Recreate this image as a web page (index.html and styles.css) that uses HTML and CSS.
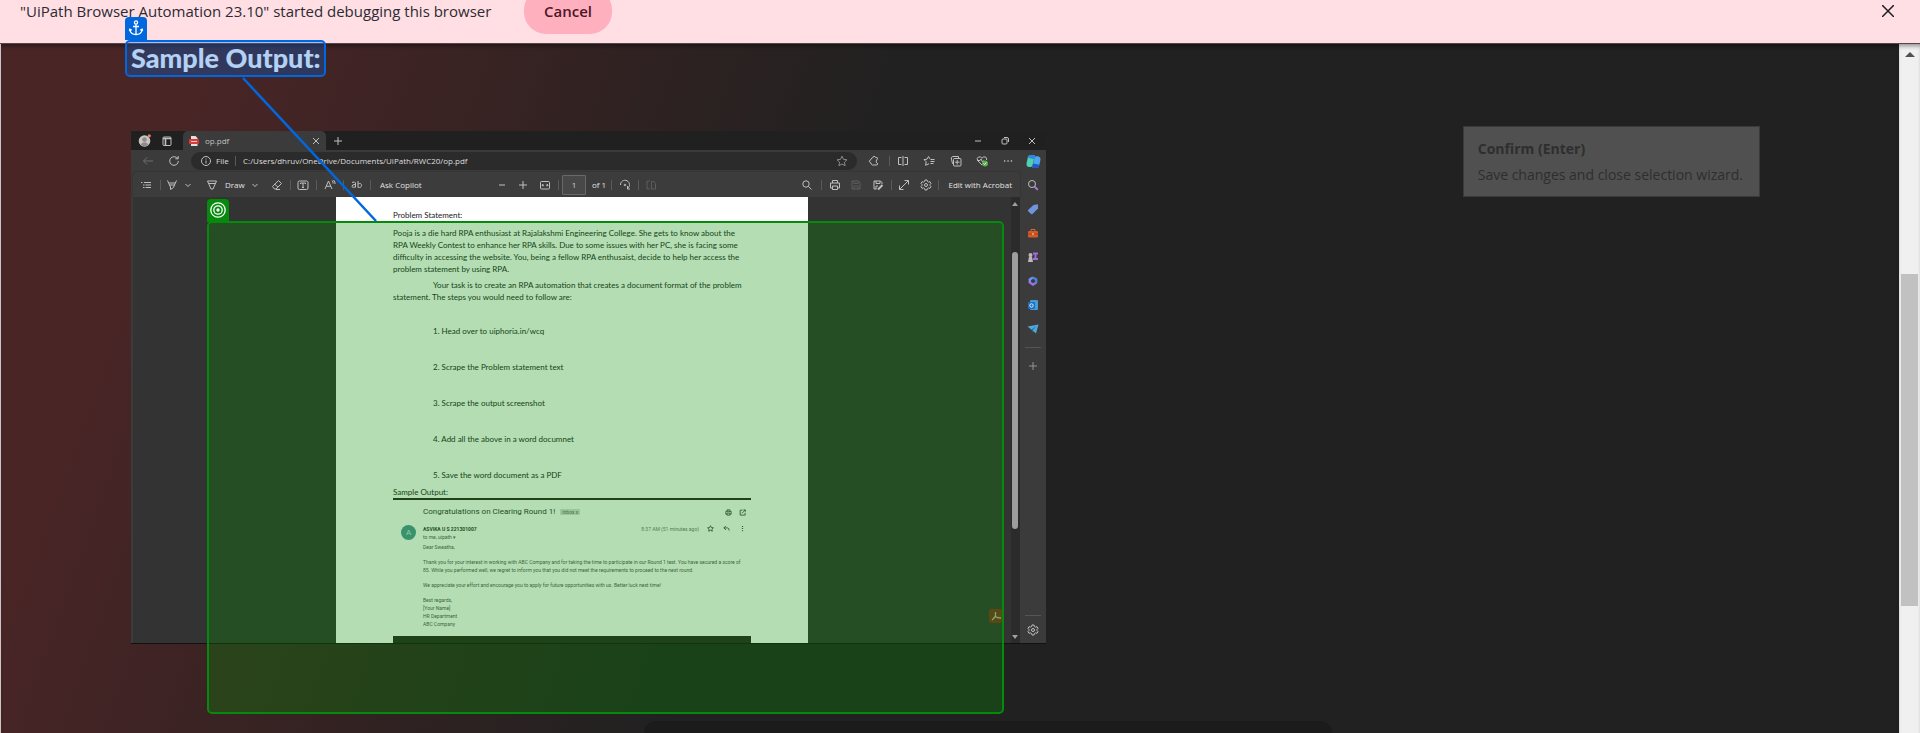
FILE: index.html
```html
<!DOCTYPE html>
<html lang="en">
<head>
<meta charset="utf-8">
<title>Sample Output</title>
<link rel="stylesheet" href="styles.css">
</head>
<body>
<svg class="sprite" aria-hidden="true">
  <symbol id="chev" viewBox="0 0 8 8"><path d="M1.500 3 4 5.500 6.500 3"/></symbol>
  <symbol id="x" viewBox="0 0 12 12"><path d="M3 3 9 9M9 3 3 9"/></symbol>
  <symbol id="plus" viewBox="0 0 12 12"><path d="M6 2V10M2 6H10"/></symbol>
  <symbol id="minus" viewBox="0 0 12 12"><path d="M3 6H9"/></symbol>
  <symbol id="gear" viewBox="0 0 12 12"><path d="M5 1h2l.4 1.500 1.100.6 1.500-.4 1 1.700L10 5.500v1L11 7.600l-1 1.700-1.500-.4-1.100.6L7 11H5l-.4-1.500-1.100-.6-1.500.4-1-1.700L2 6.500v-1L1 4.400l1-1.700 1.500.4 1.100-.6z"/><circle cx="6" cy="6" r="1.500"/></symbol>
  <symbol id="mag" viewBox="0 0 12 12"><circle cx="5" cy="5" r="3.200"/><path d="M7.500 7.500 10.500 10.500"/></symbol>
  <symbol id="star" viewBox="0 0 12 12"><path d="M6 1.200 7.500 4.400 11 4.800 8.400 7.200 9.100 10.700 6 9 2.900 10.700 3.600 7.200 1 4.800 4.500 4.400z"/></symbol>
  <symbol id="print" viewBox="0 0 12 12"><path d="M3.500 4V1.500h5V4M3.500 9H1.500V4h9v5H8.500M3.500 7h5v3.500h-5z"/></symbol>
  <symbol id="save" viewBox="0 0 12 12"><path d="M2 2h6.500L10 3.500V10H2zM4 2v2.500h4V2M4 10V7h4v3"/></symbol>
</svg>

<header class="infobar">
  <div class="infobar-row">
    <p class="infobar-text">"UiPath Browser Automation 23.10" started debugging this browser</p>
    <button class="cancel" type="button">Cancel</button>
    <button class="infobar-close" type="button" aria-label="Close"><svg viewBox="0 0 12 12"><path d="M0 0 12 12M12 0 0 12"/></svg></button>
  </div>
</header>

<div class="viewport">
<main class="stage">
  <h2 class="heading">Sample Output:</h2>

  <section class="window" aria-label="op.pdf">
    <div class="titlebar">
      <svg class="avatar-icon" viewBox="0 0 13 13"><circle cx="6.500" cy="7" r="5.800" fill="#c9c5c3"/><circle cx="6.500" cy="5.500" r="2.300" fill="#8f8a88"/><path d="M2.700 10.500q3.800-4.500 7.600 0-3.800 3.500-7.600 0" fill="#8f8a88"/><circle cx="11.300" cy="1.800" r="1.600" fill="#e88070"/></svg>
      <button class="ic workspaces" type="button" aria-label="Workspaces"><svg viewBox="0 0 12 12"><rect x="2" y="2" width="8" height="8.500" rx="1"/><path d="M2 3.500H10M4.500 3V10" stroke-width="1.600"/></svg></button>
      <div class="tab">
        <svg class="pdf-icon" viewBox="0 0 10 10"><path d="M2 0h4.500L8.500 2v8H2z" fill="#e9dcdc"/><rect y="3" width="10" height="5" rx="1" fill="#d83b3b"/><path d="M2 5.500H8" stroke="#f3c8c8"/></svg>
        <span class="tab-name">op.pdf</span>
        <button class="ic" type="button" aria-label="Close tab"><svg><use href="#x"/></svg></button>
      </div>
      <button class="ic newtab" type="button" aria-label="New tab"><svg><use href="#plus"/></svg></button>
      <div class="wincontrols">
        <button class="ic" type="button" aria-label="Minimize"><svg><use href="#minus"/></svg></button>
        <button class="ic" type="button" aria-label="Restore"><svg viewBox="0 0 12 12"><rect x="3" y="4" width="5" height="5" rx="1"/><path d="M5 2.500h3q1.500 0 1.500 1.500v3"/></svg></button>
        <button class="ic" type="button" aria-label="Close window"><svg><use href="#x"/></svg></button>
      </div>
    </div>

    <div class="addressbar">
      <button class="ic dim" type="button" aria-label="Back"><svg viewBox="0 0 12 12"><path d="M11 6H1.500M5 2.500 1.500 6 5 9.500"/></svg></button>
      <button class="ic" type="button" aria-label="Refresh"><svg viewBox="0 0 12 12"><path d="M10.300 6A4.300 4.300 0 1 1 8.500 2.500L10 3.500M10.200 1v2.800H7.400"/></svg></button>
      <div class="url">
        <svg class="glyph" viewBox="0 0 12 12"><circle cx="6" cy="6" r="4.500"/><path d="M6 5.500V8.500M6 3.500V4.500"/></svg>
        <span class="file">File</span><i class="sep"></i>
        <span class="path">C:/Users/dhruv/OneDrive/Documents/UiPath/RWC20/op.pdf</span>
        <button class="ic fav" type="button" aria-label="Favorite"><svg><use href="#star"/></svg></button>
      </div>
      <div class="browser-tools">
        <button class="ic" type="button" aria-label="Extensions"><svg viewBox="0 0 12 12"><path d="M10 3.500 9 2.700H7.800Q7.400 1.300 6 1.400 4.800 1.600 4.600 2.800L2.800 4Q2.700 4.800 2.700 5 1.300 5.200 1.300 6.300 1.400 7.300 2.700 7.500 2.800 9.500 4.500 10H8Q9.500 10 10 9M10 3.500Q8.200 4.300 8.200 6.200 8.200 8.200 10 9"/></svg></button>
        <i class="sep"></i>
        <button class="ic" type="button" aria-label="Split screen"><svg viewBox="0 0 12 12"><path d="M4.500 2.500h-3v7h3M7.500 2.500h3v7h-3M6 1V11"/></svg></button>
        <button class="ic" type="button" aria-label="Favorites"><svg viewBox="0 0 12 12"><path d="M7 4 5.500 1.500 4 4.200 1 4.600 3.200 6.800 2.600 10.300 6 8.700M7.500 4.500H11.500M7.500 6.500H11.500M7.500 8.500H10.500"/></svg></button>
        <button class="ic" type="button" aria-label="Collections"><svg viewBox="0 0 12 12"><path d="M3.500 8.500H2.500L1.200 3 2.500 1.500H8.500V3"/><rect x="3.500" y="3.500" width="7.500" height="7.500" rx="1"/><path d="M7.200 5V9.500M5 7.200H9.500"/></svg></button>
        <button class="ic" type="button" aria-label="Browser essentials"><svg viewBox="0 0 12 12"><path d="M6 10 1.500 5.500Q.5 3 2.500 2 4.500 1.200 6 3.200 7.500 1.200 9.500 2 11 3 10.500 5M1.500 5.500H4L5 4 6.500 7 7.500 5.500"/><circle cx="9" cy="8.500" r="3" fill="#5fae4a" stroke="none"/><path d="M7.600 8.500 8.600 9.500 10.300 7.600" stroke="#e8f5e4"/></svg></button>
        <button class="ic" type="button" aria-label="More"><svg viewBox="0 0 12 12"><path d="M2 6H3.300M5.400 6H6.700M8.800 6H10.100" stroke-width="1.400"/></svg></button>
        <button class="copilot" type="button" aria-label="Copilot"><svg viewBox="0 0 16 16"><path d="M4.500 1H9.500L7 12Q6.500 13.800 5 13.800H3.500Q0 13.500 .6 9.500L2 3.500Q2.600 1.200 4.500 1z" fill="#4fd0b4"/><path d="M2 4Q3 1 4.500 1H9.500L8.500 5.500z" fill="#2b8be0"/><path d="M11.500 15H6.500L9 4Q9.500 2.500 11 2.500h1.500Q16 3 15.400 6.500L14 12.500Q13.400 14.800 11.500 15z" fill="#4aa6ee"/><path d="M6.500 15 7.600 10 14.300 11.500Q13.400 15 11.500 15z" fill="#2357c4"/></svg></button>
      </div>
    </div>

    <div class="lower">
      <div class="viewer">
        <div class="pdfbar">
          <div class="tools-left">
            <button class="ic" type="button" aria-label="Contents"><svg viewBox="0 0 12 12"><path d="M1 3.500H2.500M4 3.500H11M3 6H4.500M5.500 6H11M3 8.500H4.500M5.500 8.500H11"/></svg></button>
            <i class="sep"></i>
            <button class="ic" type="button" aria-label="Highlight"><svg viewBox="0 0 12 12"><path d="M1.500 1.500 3.500 6H8.500L10.500 1.500M3.200 4H9M3.500 6 4.500 8V10.500L7.500 8.500 8.500 6"/></svg></button>
            <button class="ic small" type="button" aria-label="Highlight options"><svg><use href="#chev"/></svg></button>
            <button class="ic" type="button" aria-label="Pen"><svg viewBox="0 0 12 12"><path d="M1.500 2H10.500L7 10H5zM3 4.500H9"/></svg></button>
            <button class="txt" type="button">Draw</button>
            <button class="ic small" type="button" aria-label="Draw options"><svg><use href="#chev"/></svg></button>
            <button class="ic" type="button" aria-label="Erase"><svg viewBox="0 0 12 12"><path d="M1.500 7.500 7.500 1.500 10.500 4.500 5 10H3.500zM3.800 5.200 7 8.200M5 10.500H9"/></svg></button>
            <i class="sep"></i>
            <button class="ic" type="button" aria-label="Add text"><svg viewBox="0 0 12 12"><rect x="1" y="2" width="10" height="8.500" rx="1.500"/><path d="M3.500 5V4H8.500V5M6 4V8.500M5 8.500H7"/></svg></button>
            <i class="sep"></i>
            <button class="ic" type="button" aria-label="Read aloud"><svg viewBox="0 0 12 12"><path d="M1 10 4.500 2 8 10M2.300 7.300H6.800M8 1.500Q9.500 3 9 4.500M9.500 1Q11.500 3 11 5"/></svg></button>
            <i class="sep"></i>
            <button class="ic" type="button" aria-label="Translate"><svg viewBox="0 0 12 12"><path d="M1 3.500Q4 2 4.500 4V8.500M4.500 5.500Q1 5.300 1 7.300 1.500 9.500 4.500 7.500M7 2V8.500M7 5Q10.500 3.500 10.500 6.500 10 9.500 7 8"/></svg></button>
            <i class="sep"></i>
            <button class="txt" type="button">Ask Copilot</button>
          </div>
          <div class="tools-mid">
            <button class="ic" type="button" aria-label="Zoom out"><svg><use href="#minus"/></svg></button>
            <button class="ic" type="button" aria-label="Zoom in"><svg><use href="#plus"/></svg></button>
            <button class="ic" type="button" aria-label="Fit to width"><svg viewBox="0 0 12 12"><rect x="1.500" y="2.500" width="9" height="7.500" rx="1"/><path d="M3 6.200H5M7 6.200H9M4 5 3 6.200 4 7.400M8 5 9 6.200 8 7.400"/></svg></button>
            <i class="sep"></i>
            <input class="pageno" type="text" value="1" aria-label="Page number">
            <span class="txt">of 1</span>
            <i class="sep"></i>
            <button class="ic" type="button" aria-label="Rotate"><svg viewBox="0 0 12 12"><path d="M1.500 6A4.500 4.500 0 1 1 8.500 9.500M8.500 7V10H11"/><circle cx="6" cy="6" r=".8"/></svg></button>
            <i class="sep"></i>
            <button class="ic faint" type="button" aria-label="Page view"><svg viewBox="0 0 12 12"><path d="M5 2H2V10H5M6.500 2.500H9L10.500 4.500V10H6.500z"/></svg></button>
          </div>
          <div class="tools-right">
            <button class="ic" type="button" aria-label="Find"><svg><use href="#mag"/></svg></button>
            <i class="sep"></i>
            <button class="ic" type="button" aria-label="Print"><svg><use href="#print"/></svg></button>
            <button class="ic faint" type="button" aria-label="Save"><svg><use href="#save"/></svg></button>
            <button class="ic" type="button" aria-label="Save as"><svg viewBox="0 0 12 12"><path d="M10 5V3.500L8.500 2H2V10H4.500M4 2v2.500h4V2M4 10V7H6"/><path d="M6 10.500 10.500 6" stroke-width="2"/></svg></button>
            <i class="sep"></i>
            <button class="ic" type="button" aria-label="Full screen"><svg viewBox="0 0 12 12"><path d="M2 10 10 2M6.500 1.500H10.500V5.500M1.500 6.500V10.500H5.500"/></svg></button>
            <button class="ic" type="button" aria-label="Settings"><svg><use href="#gear"/></svg></button>
            <i class="sep"></i>
            <button class="txt" type="button">Edit with Acrobat</button>
          </div>
        </div>

        <div class="canvas">
          <article class="page">
            <p class="line">Problem Statement:</p>
            <p class="para">Pooja is a die hard RPA enthusiast at Rajalakshmi Engineering College. She gets to know about the<br>RPA Weekly Contest to enhance her RPA skills. Due to some issues with her PC, she is facing some<br>difficulty in accessing the website. You, being a fellow RPA enthusaist, decide to help her access the<br>problem statement by using RPA.</p>
            <p class="para indent">Your task is to create an RPA automation that creates a document format of the problem<br>statement. The steps you would need to follow are:</p>
            <div class="steps">
              <p>1. Head over to uiphoria.in/wcq</p>
              <p>2. Scrape the Problem statement text</p>
              <p>3. Scrape the output screenshot</p>
              <p>4. Add all the above in a word documnet</p>
              <p>5. Save the word document as a PDF</p>
            </div>
            <p class="line">Sample Output:</p>
            <section class="mail">
              <div class="mail-head">
                <h3 class="subject">Congratulations on Clearing Round 1!</h3>
                <span class="inbox">Inbox x</span>
                <span class="mail-icons"><svg><use href="#print"/></svg><svg viewBox="0 0 12 12"><path d="M6 2H2V10.500H10.500V6.500M7.500 1.500H10.800V4.800M5 7.500 10.500 1.800"/></svg></span>
              </div>
              <div class="sender">
                <span class="initial">A</span>
                <div class="who"><strong>ASVIKA U S 221301007</strong><span>to me, uipath ▾</span></div>
                <span class="when">8:37 AM (51 minutes ago)</span>
                <span class="mail-icons wide"><svg><use href="#star"/></svg><svg viewBox="0 0 12 12"><path d="M5 1.500 1.500 5 5 8.500M1.500 5H8Q10.500 5 10.500 9.500"/></svg><svg viewBox="0 0 12 12"><path d="M6 1.500V3.300M6 5.200V7M6 8.900V10.700" stroke-width="2"/></svg></span>
              </div>
              <div class="mail-body">
                <p>Dear Sweatha,</p>
                <p>Thank you for your interest in working with ABC Company and for taking the time to participate in our Round 1 test. You have secured a score of<br>85. While you performed well, we regret to inform you that you did not meet the requirements to proceed to the next round.</p>
                <p>We appreciate your effort and encourage you to apply for future opportunities with us. Better luck next time!</p>
                <p>Best regards,<br>[Your Name]<br>HR Department<br>ABC Company</p>
              </div>
            </section>
          </article>
          <svg class="acrobat" viewBox="0 0 13 14"><rect width="13" height="14" rx="2" fill="#7c2c1c"/><path d="M6.500 3V6.500Q6 9 3 11M6.500 7.500Q8 9 12 9" fill="none" stroke="#b8b0a8" stroke-width="1.300"/></svg>
          <div class="inner-scroll"><i class="up"></i><i class="inner-thumb"></i><i class="down"></i></div>
        </div>
      </div>

      <nav class="sidebar" aria-label="Sidebar">
        <button class="ic" type="button" aria-label="Search"><svg viewBox="0 0 12 12"><circle cx="5" cy="5" r="3.500"/><path d="M7.500 7.500 10.800 10.800" stroke="#a97be0" stroke-width="1.800"/></svg></button>
        <button class="ic" type="button" aria-label="Shopping"><svg viewBox="0 0 12 12"><path d="M1 7 6.500 2 11 1.300V5.500L5.500 11Q4.500 11.500 3.500 10.500L1 8z" fill="#6f93dc" stroke="none"/></svg></button>
        <button class="ic" type="button" aria-label="Tools"><svg viewBox="0 0 12 12"><path d="M4 4V2.500H8V4" stroke="#d8693a"/><rect x="1" y="4" width="10" height="6.500" rx="1" fill="#d65a26" stroke="none"/><path d="M1 7H5M7 7H11" stroke="#a8431a"/><path d="M6 6V8" stroke="#f0d0b8"/></svg></button>
        <button class="ic" type="button" aria-label="Games"><svg viewBox="0 0 12 12"><g stroke="none"><circle cx="3.500" cy="4" r="2" fill="#bdb8b8"/><path d="M2 5.500H5L6 11H1z" fill="#bdb8b8"/><path d="M6 1.500H11V3.500H9.500V7H11V9H6V7H7.500V3.500H6z" fill="#a46be0"/></g></svg></button>
        <button class="ic" type="button" aria-label="Microsoft 365"><svg viewBox="0 0 12 12"><path d="M6 2.500 2.800 4.500V8" stroke="#7a8ef0" stroke-width="2.400"/><path d="M2.800 7.500 6 9.600 9.200 7.800" stroke="#9a6fe6" stroke-width="2.400"/><path d="M9.200 8V4.500L6 2.500" stroke="#4b83d9" stroke-width="2.400"/></svg></button>
        <button class="ic" type="button" aria-label="Outlook"><svg viewBox="0 0 12 12"><rect x="3" y="1" width="8" height="10" rx="1" fill="#4a9ad8" stroke="none"/><rect x="1" y="3" width="7" height="7" rx="1" fill="#1e6fc0" stroke="none"/><circle cx="4.500" cy="6.500" r="1.700" stroke="#e4f0fa"/></svg></button>
        <button class="ic" type="button" aria-label="Telegram"><svg viewBox="0 0 12 12"><path d="M.5 3.500 11.500 1.500 9 10.500 5.500 7.500z" fill="#4fa8dc" stroke="none"/><path d="M4.500 6.500 9.500 3 5.500 7.500V10z" fill="#2a6f9f" stroke="none"/></svg></button>
        <i class="rule"></i>
        <button class="ic dimmer" type="button" aria-label="Customize"><svg><use href="#plus"/></svg></button>
        <i class="rule bottom"></i>
        <button class="ic" type="button" aria-label="Sidebar settings"><svg><use href="#gear"/></svg></button>
      </nav>
    </div>
  </section>

  <div class="footer-panel"></div>

  <aside class="tip"><strong>Confirm (Enter)</strong><span>Save changes and close selection wizard.</span></aside>

  <div class="target"><span class="badge target-badge"><svg viewBox="0 0 18 18"><circle cx="9" cy="9" r="7.200"/><circle cx="9" cy="9" r="4.200"/><circle cx="9" cy="9" r="1" fill="#fff"/></svg></span></div>
  <div class="anchor"><span class="badge anchor-badge"><svg viewBox="0 0 18 18"><circle cx="9" cy="3.500" r="1.600"/><path d="M9 5.200V15.500M6 7.500H12M2.800 10.500Q3.500 15.500 9 15.500 14.500 15.500 15.200 10.500M2.500 12.200 2.800 10.300 4.700 11.200M15.500 12.200 15.200 10.300 13.300 11.200"/></svg></span></div>
  <svg class="connector" viewBox="0 0 136 146"><path d="M1 1 134 144"/></svg>
</main>
<div class="scrollbar"><i class="arrow"></i><i class="thumb"></i></div>
</div>
</body>
</html>
```
FILE: styles.css
```css
* { box-sizing: border-box; }
body { margin: 0; min-height: 100vh; display: flex; flex-direction: column; background: #212121; font-family: "Open Sans", "Noto Sans", sans-serif; }
p, h2, h3 { margin: 0; }
button { padding: 0; border: 0; background: none; color: inherit; font: inherit; }
svg { display: block; fill: none; stroke: currentColor; stroke-width: 1; }
.sprite { position: absolute; width: 0; height: 0; }

.infobar { height: 44px; overflow: hidden; background: #ffdfe4; border-bottom: 1px solid #54474a; color: #2b2b33; }
.infobar-row { height: 46px; margin-top: -12px; padding: 0 26px 0 20px; display: flex; align-items: center; }
.infobar-text { width: 504px; font-size: 15px; line-height: 20px; white-space: nowrap; }
.cancel { width: 88px; height: 46px; border-radius: 22px; background: #ffb0be; color: #4b1626; font-size: 15px; font-weight: 600; }
.infobar-close { margin-left: auto; }
.infobar-close svg { width: 12px; height: 12px; stroke: #1d1d1f; stroke-width: 1.500; }

.viewport { flex: 1; display: flex; }
.stage { position: relative; flex: 1; display: flex; flex-direction: column; padding-left: 130px; border-left: 1px solid #cfc4c6; background: linear-gradient(110deg, #4a2526 180px, #332222 550px, #212121 860px); box-shadow: inset 0 4px 4px -2px #0006; }
.heading { margin-bottom: 59px; font: 900 27px/28px Lato, sans-serif; color: #fff; }

.scrollbar { width: 21px; padding: 8px 2px 0; background: #f0f0f0; box-shadow: inset 0 4px 4px -2px #0006; display: flex; flex-direction: column; align-items: center; }
.arrow { border: 5px solid transparent; border-top: 0; border-bottom-color: #505050; }
.thumb { width: 17px; height: 332px; margin-top: 217px; background: #c1c1c1; }

.window { max-width: 915px; border-bottom: 1px solid #111; background: #3b3b3b; color: #c0c0c0; font-size: 8px; line-height: 12px; }
.ic { flex: none; width: 12px; height: 12px; display: block; }
.ic svg { width: 12px; height: 12px; }
.ic.small, .ic.small svg { width: 8px; height: 8px; }
.dim { color: #6e6e6e; }
.faint { color: #5c5c5c; }
.dimmer { color: #949494; }
.sep { display: block; flex: none; width: 1px; height: 10px; background: #5a5a5a; }
.txt { color: #e2e2e2; text-align: left; white-space: nowrap; }

.titlebar { height: 19px; display: flex; align-items: center; padding-left: 7px; background: #202020; }
.avatar-icon { width: 13px; height: 13px; stroke: none; }
.workspaces { margin: 0 10px; }
.tab { width: 143px; height: 19px; padding: 0 4px 0 6px; display: flex; align-items: center; border-radius: 5px 5px 0 0; background: #3b3b3b; }
.pdf-icon { width: 10px; height: 10px; stroke: none; }
.tab-name { flex: 1; padding-left: 6px; }
.newtab { margin-left: 6px; }
.wincontrols { margin-left: auto; padding-right: 8px; display: flex; gap: 15px; }

.addressbar { height: 22px; padding-left: 11px; display: flex; align-items: center; }
.addressbar > .ic { margin-right: 14px; }
.addressbar > .ic + .ic { margin-right: 11px; }
.url { flex: 1; height: 18px; padding: 0 9px; display: flex; align-items: center; border-radius: 9px; background: #2b2b2b; }
.glyph { width: 12px; height: 12px; }
.file { width: 23px; padding-left: 4px; color: #dedede; }
.path { padding-left: 7px; color: #dedede; white-space: nowrap; }
.fav { margin-left: auto; color: #8b8b8b; }
.browser-tools { padding-left: 11px; display: grid; grid-template-columns: 21px 8px 26px 27px 26px 26px 24px 20px; align-items: center; }
.copilot svg { width: 15px; height: 15px; stroke: none; }

.lower { display: flex; }
.viewer { flex: 1; padding-left: 2px; }
.pdfbar { height: 25px; padding: 0 8px 0 7px; display: flex; align-items: center; background: #3c3c3c; border-radius: 4px 4px 0 0; box-shadow: 0 0 2px #2a2a2a; }
.tools-left, .tools-mid, .tools-right { display: grid; align-items: center; }
.tools-left { grid-template-columns: 20px 6px 18px 22px 19px 26px 20px 19px 7px 19px 8px 19px 8px 19px 10px 116px; }
.tools-mid { grid-template-columns: 21px 22px 19px 4px 30px 19px 8px 19px 7px 12px; }
.tools-right { margin-left: auto; grid-template-columns: 20px 8px 21px 22px 19px 7px 22px 18px 10px auto; }
.pageno { width: 24px; height: 20px; padding: 0; border: 1px solid #686868; border-radius: 1px; background: #484848; color: #d0d0d0; font: inherit; text-align: center; }

.canvas { position: relative; display: flex; justify-content: space-between; background: #333; padding-left: 203px; }
.page { width: 472px; padding: 12px 57px 0; background: #fff; color: #222; font: 8px/12px Lato, sans-serif; white-space: nowrap; }
.para { margin-top: 6px; }
.indent { margin-top: 4px; text-indent: 40px; }
.steps { margin: 22px 0 5px; padding-left: 40px; display: grid; gap: 24px; }
.acrobat { position: absolute; right: 18px; bottom: 20px; width: 13px; height: 14px; stroke: none; }
.inner-scroll { width: 9px; padding: 5px 2px 4px 1px; background: #2b2b2b; display: flex; flex-direction: column; align-items: center; }
.up { border: 3px solid transparent; border-top: 0; border-bottom: 4px solid #a0a0a0; }
.down { margin-top: auto; border: 3px solid transparent; border-bottom: 0; border-top: 4px solid #a0a0a0; }
.inner-thumb { width: 6px; height: 277px; margin-top: 46px; border-radius: 3px; background: #9d9d9d; }

.mail { border-top: 2px solid #2a2222; border-bottom: 7px solid #2a2222; color: #555; font: 5px/8px Roboto, sans-serif; }
.mail-head { padding: 6px 5px 0 30px; display: flex; align-items: center; }
.subject { font: 400 8px/12px Roboto, sans-serif; color: #333; }
.inbox { margin-left: 5px; padding: 0 2px; border-radius: 1px; background: #ddd; color: #666; line-height: 6px; }
.mail-icons { margin-left: auto; display: flex; gap: 7px; color: #444; }
.mail-icons svg { width: 7px; height: 7px; stroke-width: 1.500; }
.sender { height: 17px; margin-top: 7px; padding: 0 5px 0 8px; display: flex; align-items: flex-start; }
.initial { width: 15px; height: 15px; margin-right: 7px; border-radius: 50%; background: #4f9498; color: #cfe8e6; font-size: 8px; line-height: 15px; text-align: center; }
.who { display: flex; flex-direction: column; }
.who strong { font-weight: 700; color: #333; }
.when { margin-left: auto; color: #777; }
.mail-icons.wide { margin-left: 8px; gap: 9px; }
.mail-body { margin-top: 1px; padding: 0 0 8px 30px; display: grid; gap: 7px; }

.sidebar { width: 26px; padding: 7px 0; display: flex; flex-direction: column; align-items: center; gap: 12px; }
.rule { width: 16px; height: 1px; background: #555; }
.rule.bottom { margin-top: auto; }
.sidebar .ic:last-child { margin-top: -4px; }

.footer-panel { width: 688px; min-height: 12px; margin: auto 0 0 513px; border-radius: 14px 14px 0 0; background: #1b1b1b; }

.tip { position: absolute; top: 82px; right: 139px; padding: 12px 16px 11px 14px; display: flex; flex-direction: column; gap: 6px; border: 1px solid #3a3a3a; background: #505050; color: #2e2e2e; font-size: 14px; line-height: 20px; white-space: nowrap; }
.target { position: absolute; top: 177px; left: 206px; width: 797px; height: 493px; border: 2px solid #058a0c; border-radius: 5px; background: rgba(8, 144, 8, .3); }
.anchor { position: absolute; top: -4px; left: 124px; width: 201px; height: 37px; border: 2px solid #0067df; border-radius: 5px; background: rgba(0, 103, 223, .3); }
.badge { position: absolute; left: -2px; width: 22px; height: 23px; padding: 2px; border-radius: 4px 4px 0 0; }
.badge svg { width: 18px; height: 18px; stroke: #fff; stroke-width: 1.300; }
.target-badge { top: -24px; background: #058a0c; }
.anchor-badge { top: -25px; background: #0067df; }
.connector { position: absolute; top: 33px; left: 241px; width: 136px; height: 146px; stroke: #0067df; stroke-width: 2.500; }
```
